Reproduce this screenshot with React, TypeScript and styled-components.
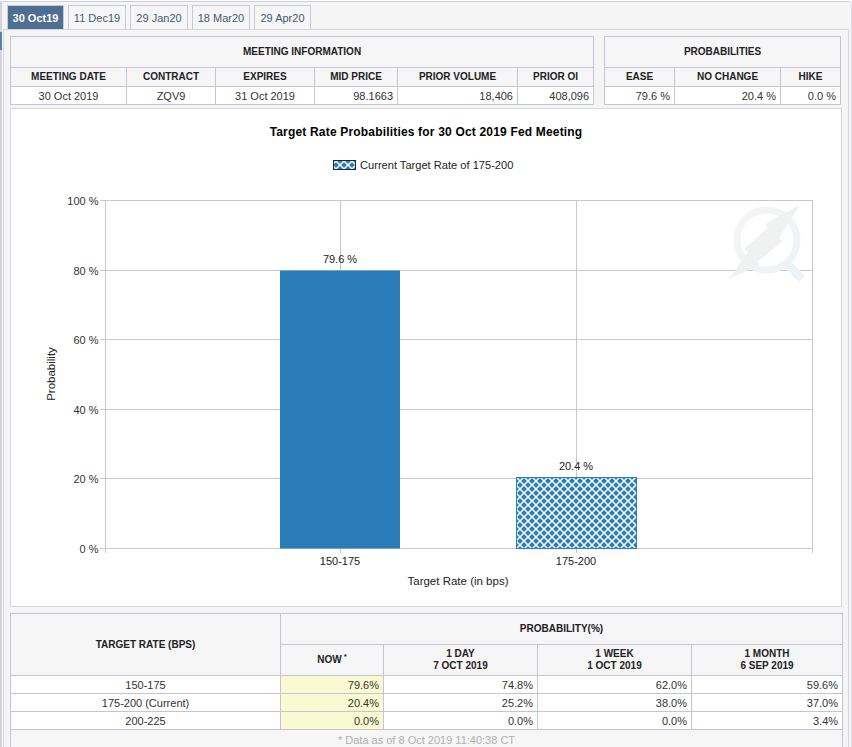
import React from "react";
import styled, { createGlobalStyle } from "styled-components";

const Global = createGlobalStyle`
  html, body { margin: 0; padding: 0; background: #fff; }
  body { font-family: "Liberation Sans", Arial, sans-serif; font-size: 11px; color: #333; }
  #root { width: 852px; height: 747px; overflow: hidden; }
`;

const Page = styled.div`
  width: 852px;
  height: 747px;
  box-sizing: border-box;
  padding-top: 1px;
  overflow: hidden;
`;
const Outer = styled.div`
  position: relative;
  box-sizing: border-box;
  height: 770px;
  background: #f5f5f5;
  border-top: 1px solid #cfcfdb;
  border-right: 1px solid #dcdce4;
  border-left: 2px solid #d4d4d8;
  border-top-right-radius: 4px;
  &::before {
    content: "";
    position: absolute;
    left: -2px;
    top: 30px;
    width: 2px;
    height: 18px;
    background: #5b7fa6;
  }
`;
const TabBar = styled.div`
  display: flex;
  gap: 4px;
  padding: 3px 0 0 5px;
  height: 27px;
  box-sizing: border-box;
`;
const Tab = styled.div<{ $active?: boolean; $width: number }>`
  width: ${(p) => p.$width}px;
  height: 24px;
  box-sizing: border-box;
  display: flex;
  align-items: center;
  justify-content: center;
  font-size: 11px;
  border: 1px solid #c9c9d6;
  border-bottom: 0;
  background: ${(p) => (p.$active ? "#4f6f92" : "#f6f6f6")};
  color: ${(p) => (p.$active ? "#fff" : "#45586e")};
  font-weight: ${(p) => (p.$active ? 700 : 400)};
`;
const Panel = styled.div`
  margin: 0 2px 0 1px;
  border: 1px solid #d6d6dc;
  box-shadow: -1px 0 0 #fff;
  background: #f5f5f5;
  padding: 6px 6px 0 6px;
  display: flex;
  flex-direction: column;
  gap: 4px;
  height: 740px;
  box-sizing: border-box;
`;
const TopRow = styled.div`
  display: flex;
  justify-content: space-between;
  padding-right: 1px;
  margin-bottom: -1px;
`;
const Table = styled.table<{ $w: number }>`
  width: ${(p) => p.$w}px;
  table-layout: fixed;
  border-collapse: collapse;
  background: #fff;
`;
const Head = styled.th<{ $h: number }>`
  height: ${(p) => p.$h}px;
  padding: 0;
  box-sizing: border-box;
  border: 1px solid #c4c4d4;
  background: #f6f6f6;
  color: #222;
  font-size: 10px;
  font-weight: 700;
  line-height: 12px;
  text-align: center;
`;
const Cell = styled.td<{ $align?: string; $now?: boolean }>`
  height: 18px;
  padding: 0 4px;
  box-sizing: border-box;
  border: 1px solid #c4c4d4;
  font-size: 11px;
  color: #333;
  text-align: ${(p) => p.$align || "right"};
  background: ${(p) => (p.$now ? "#fafad2" : "#fff")};
`;
const Note = styled.td`
  height: 20px;
  padding: 0;
  border: 1px solid #c4c4d4;
  background: #f6f6f6;
  color: #b0b0b0;
  font-size: 11px;
  text-align: center;
`;
const Star = styled.sup`
  font-size: 8px;
  line-height: 0;
  margin-left: 2px;
`;
const ChartPanel = styled.div`
  height: 499px;
  box-sizing: border-box;
  background: #fff;
  border: 1px solid #d8d8d8;
  margin-bottom: 2px;
`;
const ChartSvg = styled.svg`
  display: block;
  font-family: "Liberation Sans", Arial, sans-serif;
`;

const W = ({ w }: { w: number }) => <col style={{ width: w }} />;

const ys = [0, 20, 40, 60, 80, 100];
const yOf = (v: number) => Math.floor(548.5 - v * 3.48) + 0.5;

function Chart() {
  return (
    <ChartPanel>
      <ChartSvg width="830" height="497" viewBox="11 109 830 497">
        <defs>
          <pattern id="hatch" width="8" height="8" patternUnits="userSpaceOnUse" x="516" y="477">
            <rect width="8" height="8" fill="#2a7db8" />
            <path d="M0 0 L8 8 M8 0 L0 8" stroke="#fff" strokeWidth="1.5" />
          </pattern>
          <linearGradient id="wm" x1="0" y1="0" x2="1" y2="1">
            <stop offset="0" stopColor="#f4f5f5" />
            <stop offset="1" stopColor="#ecf3f7" />
          </linearGradient>
        </defs>
        <text x="426" y="135.5" textAnchor="middle" fontSize="12" fontWeight="700" letterSpacing="0.18" fill="#000">
          Target Rate Probabilities for 30 Oct 2019 Fed Meeting
        </text>
        <rect x="333.5" y="160.5" width="22" height="9" fill="url(#hatch)" stroke="#1a2a3a" />
        <text x="360" y="169" fontSize="11.1" fill="#222">Current Target Rate of 175-200</text>

        {ys.map((v) => (
          <g key={v}>
            <line x1="100" x2="812" y1={yOf(v)} y2={yOf(v)} stroke="#c8c8c8" />
            <text x="98.5" y={yOf(v) + 4} textAnchor="end" fontSize="11" fill="#333">{v} %</text>
          </g>
        ))}
        {[105.5, 340.5, 576.5, 812.5].map((x) => (
          <line key={x} x1={x} x2={x} y1="200" y2="553" stroke="#c8c8c8" />
        ))}

        <g>
          <circle cx="767" cy="240" r="30" fill="none" stroke="url(#wm)" strokeWidth="7" />
          <path d="M785 262 L802 279" stroke="#ecf3f7" strokeWidth="9" />
          <path d="M800 205 L779 238 L783 241 L757 262 L759 265 L729 279 L748 252 L744 249 L768 228 L765 224 Z" fill="#f0f2f2" />
        </g>

        <rect x="280" y="270.5" width="120" height="278" fill="#2a7db8" />
        <rect x="516.5" y="477.5" width="120" height="71" fill="url(#hatch)" stroke="#2a7db8" />

        <text x="340" y="263" textAnchor="middle" fontSize="11" fill="#222">79.6 %</text>
        <text x="576" y="470" textAnchor="middle" fontSize="11" fill="#222">20.4 %</text>
        <text x="340" y="565" textAnchor="middle" fontSize="11" fill="#222">150-175</text>
        <text x="576" y="565" textAnchor="middle" fontSize="11" fill="#222">175-200</text>
        <text x="458" y="585" textAnchor="middle" fontSize="11.5" fill="#222">Target Rate (in bps)</text>
        <text transform="translate(55 374) rotate(-90)" textAnchor="middle" fontSize="11.5" fill="#222">Probability</text>
      </ChartSvg>
    </ChartPanel>
  );
}

const rows = [
  ["150-175", "79.6%", "74.8%", "62.0%", "59.6%"],
  ["175-200 (Current)", "20.4%", "25.2%", "38.0%", "37.0%"],
  ["200-225", "0.0%", "0.0%", "0.0%", "3.4%"],
];

export default function App() {
  return (
    <Page>
      <Global />
      <Outer>
        <TabBar>
          <Tab $width={57} $active>30 Oct19</Tab>
          <Tab $width={58}>11 Dec19</Tab>
          <Tab $width={58}>29 Jan20</Tab>
          <Tab $width={58}>18 Mar20</Tab>
          <Tab $width={57}>29 Apr20</Tab>
        </TabBar>
        <Panel>
          <TopRow>
            <Table $w={583}>
              <colgroup>
                {[116, 89, 99, 83, 120, 76].map((w, i) => <W key={i} w={w} />)}
              </colgroup>
              <thead>
                <tr><Head $h={31} colSpan={6}>MEETING INFORMATION</Head></tr>
                <tr>
                  {["MEETING DATE", "CONTRACT", "EXPIRES", "MID PRICE", "PRIOR VOLUME", "PRIOR OI"].map((t) => (
                    <Head $h={19} key={t}>{t}</Head>
                  ))}
                </tr>
              </thead>
              <tbody>
                <tr>
                  <Cell $align="center">30 Oct 2019</Cell>
                  <Cell $align="center">ZQV9</Cell>
                  <Cell $align="center">31 Oct 2019</Cell>
                  <Cell>98.1663</Cell>
                  <Cell>18,406</Cell>
                  <Cell>408,096</Cell>
                </tr>
              </tbody>
            </Table>
            <Table $w={236}>
              <colgroup>
                {[70, 106, 60].map((w, i) => <W key={i} w={w} />)}
              </colgroup>
              <thead>
                <tr><Head $h={31} colSpan={3}>PROBABILITIES</Head></tr>
                <tr>
                  {["EASE", "NO CHANGE", "HIKE"].map((t) => <Head $h={19} key={t}>{t}</Head>)}
                </tr>
              </thead>
              <tbody>
                <tr>
                  <Cell>79.6 %</Cell>
                  <Cell>20.4 %</Cell>
                  <Cell>0.0 %</Cell>
                </tr>
              </tbody>
            </Table>
          </TopRow>
          <Chart />
          <Table $w={832}>
            <colgroup>
              {[270, 103, 154, 154, 151].map((w, i) => <W key={i} w={w} />)}
            </colgroup>
            <thead>
              <tr>
                <Head $h={31} rowSpan={2}>TARGET RATE (BPS)</Head>
                <Head $h={31} colSpan={4}>PROBABILITY(%)</Head>
              </tr>
              <tr>
                <Head $h={31}>NOW<Star>*</Star></Head>
                <Head $h={31}>1 DAY<br />7 OCT 2019</Head>
                <Head $h={31}>1 WEEK<br />1 OCT 2019</Head>
                <Head $h={31}>1 MONTH<br />6 SEP 2019</Head>
              </tr>
            </thead>
            <tbody>
              {rows.map((r) => (
                <tr key={r[0]}>
                  <Cell $align="center">{r[0]}</Cell>
                  <Cell $now>{r[1]}</Cell>
                  <Cell>{r[2]}</Cell>
                  <Cell>{r[3]}</Cell>
                  <Cell>{r[4]}</Cell>
                </tr>
              ))}
              <tr><Note colSpan={5}>* Data as of 8 Oct 2019 11:40:38 CT</Note></tr>
            </tbody>
          </Table>
        </Panel>
      </Outer>
    </Page>
  );
}
